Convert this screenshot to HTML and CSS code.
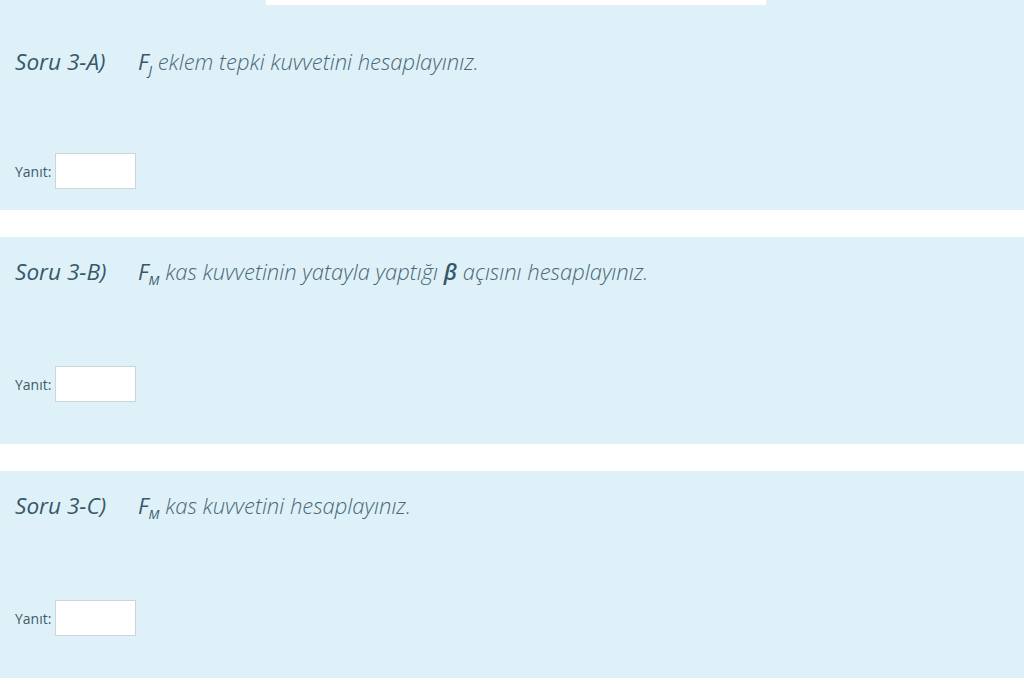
FILE: index.html
```html
<!DOCTYPE html>
<html lang="tr">
<head>
<meta charset="utf-8">
<title>Sorular</title>
<link rel="stylesheet" href="styles.css">
</head>
<body>
<div class="que first">
  <div class="topbar"></div>
  <p class="qtext"><span class="qno">Soru 3-A)</span><span class="qbody"><span class="sym">F<sub>J</sub></span> eklem tepki kuvvetini hesaplayınız.</span></p>
  <div class="answer"><label class="lbl">Yanıt:</label><input class="box" type="text"></div>
</div>
<div class="que">
  <p class="qtext"><span class="qno">Soru 3-B)</span><span class="qbody"><span class="sym">F<sub>M</sub></span> kas kuvvetinin yatayla yaptığı <span class="sym beta">β</span> açısını hesaplayınız.</span></p>
  <div class="answer"><label class="lbl">Yanıt:</label><input class="box" type="text"></div>
</div>
<div class="que">
  <p class="qtext"><span class="qno">Soru 3-C)</span><span class="qbody"><span class="sym">F<sub>M</sub></span> kas kuvvetini hesaplayınız.</span></p>
  <div class="answer"><label class="lbl">Yanıt:</label><input class="box" type="text"></div>
</div>
</body>
</html>
```
FILE: styles.css
```css
html, body { margin: 0; padding: 0; background: #ffffff; }
body { font-family: "Open Sans", "DejaVu Sans", sans-serif; }
.que {
  background: #dff1f8;
  padding: 20px 15px 42px;
  margin-bottom: 27px;
}
.que.first { padding-top: 0; padding-bottom: 21px; }
.topbar {
  width: 500px;
  height: 5px;
  margin-left: 251px;
  background: #ffffff;
  border-bottom: 1px solid #e6eef0;
  margin-bottom: 41px;
}
.qtext {
  margin: 0;
  height: 28px;
  font-size: 22px;
  line-height: 28px;
  font-style: italic;
  white-space: nowrap;
}
.qno {
  display: inline-block;
  width: 123px;
  font-size: 22.6px;
  line-height: 28px;
  color: #37586a;
  font-weight: 400;
}
.qbody { color: #4a6877; font-weight: 300; }
.sym { font-weight: 500; color: #37586a; }
.beta { font-weight: 600; }
.qbody sub { font-size: 13px; line-height: 0; vertical-align: -5px; font-weight: 400; }
.answer {
  display: flex;
  align-items: center;
  gap: 4px;
  margin-top: 81px;
}
.que.first .answer { margin-top: 78px; }
.lbl { font-size: 14px; color: #3f5b69; }
.box {
  width: 79px;
  height: 34px;
  margin: 0;
  padding: 0;
  border: 1px solid #cdd5d8;
  background: #ffffff;
  box-sizing: content-box;
}
```
